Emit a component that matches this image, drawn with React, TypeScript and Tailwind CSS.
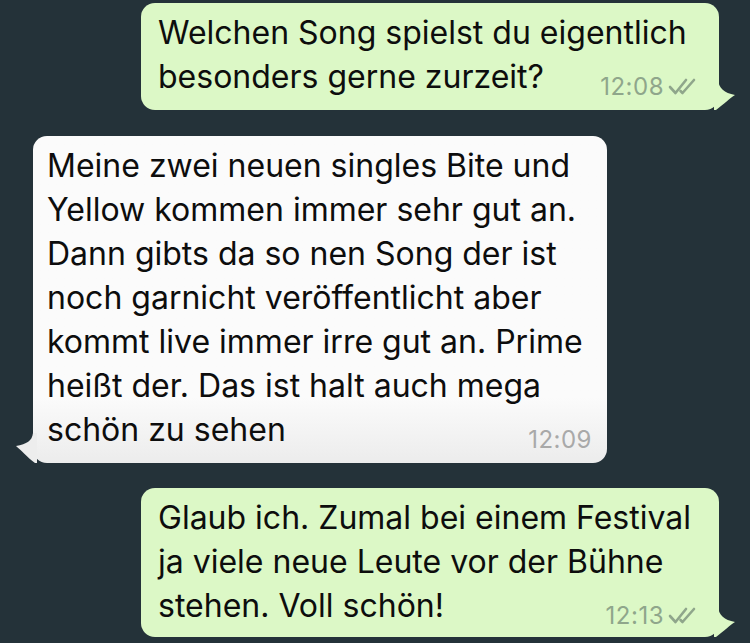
import React from 'react'

type props = {
  lines: string[],
  time: string,
  mine?: boolean,
  pb: string,
}

const Ticks = () => (
  <svg width="33" height="17" viewBox="0 0 33 17" fill="none" stroke="#8fa68b" strokeWidth="2.6" strokeLinecap="round" strokeLinejoin="round">
    <path d="M2 9 L7.5 15 L18 2" />
    <path d="M12.5 13 L14.5 15 L26 2" />
  </svg>
)

const TailRight = () => (
  <svg className="absolute -right-[17px] bottom-0" width="22" height="30" viewBox="0 0 22 30">
    <path d="M0 0 L4 0 C5 8 10 13 21 15 C16 18 10 24 2 30 L0 30 Z" fill="#dcf8c6" />
  </svg>
)

const TailLeft = () => (
  <svg className="absolute -left-[18px] bottom-0" width="22" height="30" viewBox="0 0 22 30">
    <path d="M22 0 L18 0 C17 8 12 11 1 13 C6 17 12 24 20 30 L22 30 Z" fill="#ededed" />
  </svg>
)

const Bubble = ({lines, time, mine, pb}: props) => {
  const last = lines[lines.length - 1]
  return (
    <div
      className={
        (mine
          ? 'relative ml-[141px] w-[578px] rounded-[14px] bg-[#dcf8c6] pl-[17px] pr-[18px] pt-[8px] '
          : 'relative ml-[33px] w-[574px] rounded-[14px] bg-linear-to-b from-[#fbfbfb] from-80% to-[#ececec] pl-[14px] pr-[15px] pt-[8px] ') + pb
      }
    >
      {lines.slice(0, -1).map((l, i) => (
        <div key={i} className="leading-[44px] whitespace-nowrap">{l}</div>
      ))}
      <div className="flex items-end justify-between">
        <span className="leading-[44px] whitespace-nowrap">{last}</span>
        <span className="flex items-end gap-[4px] leading-[24px]">
          <span className={mine ? 'text-[24px] tracking-[0.5px] text-[#8fa68b]' : 'text-[24px] tracking-[0.5px] text-[#a9a9a9]'}>{time}</span>
          {mine && <span className="mb-[4px]"><Ticks /></span>}
        </span>
      </div>
      {mine ? <TailRight /> : <TailLeft />}
    </div>
  )
}

export default function App() {
  return (
    <div className="w-[750px] h-[643px] overflow-hidden bg-[#243239] pt-[3px] text-[32px] text-[#0d0d0d]" style={{fontFamily: 'Inter, "Liberation Sans", sans-serif'}}>
      <Bubble
        mine
        pb="pb-[11px]"
        lines={['Welchen Song spielst du eigentlich', 'besonders gerne zurzeit?']}
        time="12:08"
      />
      <div className="mt-[26px]">
        <Bubble
          pb="pb-[11px]"
          lines={[
            'Meine zwei neuen singles Bite und',
            'Yellow kommen immer sehr gut an.',
            'Dann gibts da so nen Song der ist',
            'noch garnicht veröffentlicht aber',
            'kommt live immer irre gut an. Prime',
            'heißt der. Das ist halt auch mega',
            'schön zu sehen',
          ]}
          time="12:09"
        />
      </div>
      <div className="mt-[25px]">
        <Bubble
          mine
          pb="pb-[9px]"
          lines={['Glaub ich. Zumal bei einem Festival', 'ja viele neue Leute vor der Bühne', 'stehen. Voll schön!']}
          time="12:13"
        />
      </div>
    </div>
  )
}
